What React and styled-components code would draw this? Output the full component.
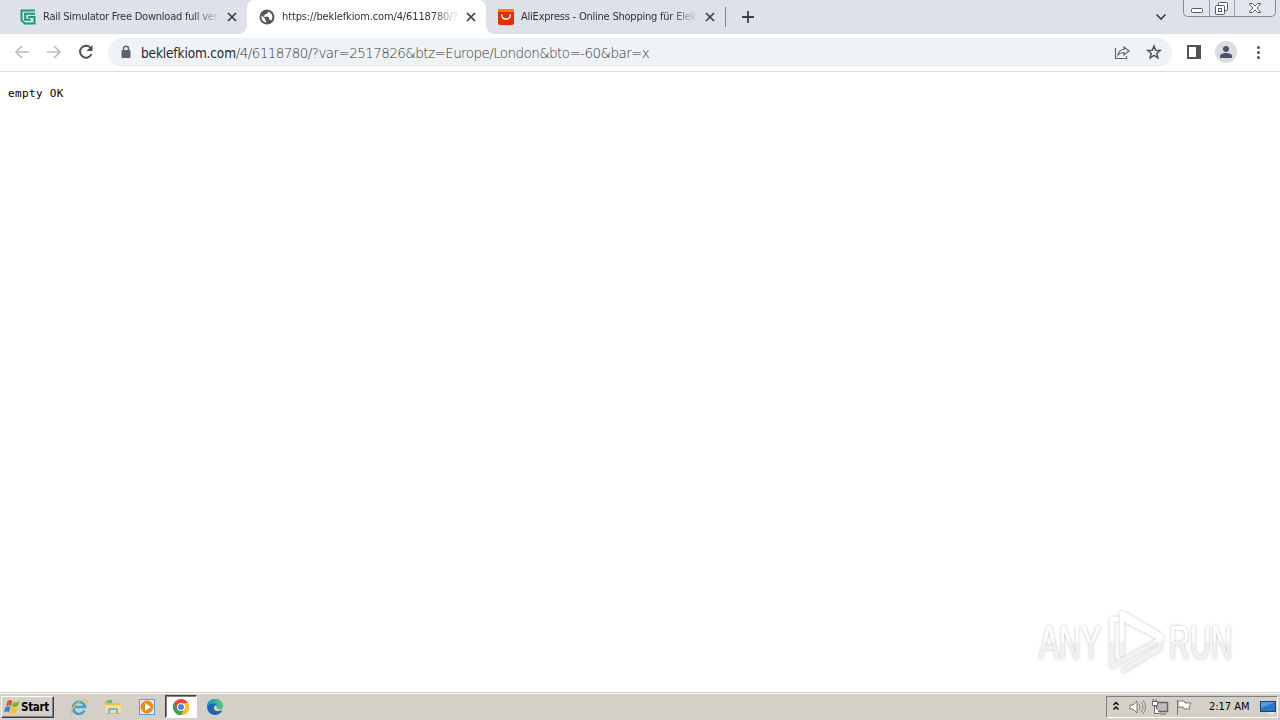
import React from 'react';
import styled, { createGlobalStyle } from 'styled-components';

const Global = createGlobalStyle`
*{ box-sizing:border-box; }
html,body{ margin:0;background:#fff;overflow:hidden; }
svg{ display:block;flex:none; }
`;

const Screen = styled.div`
width:1280px;height:720px;display:flex;flex-direction:column;overflow:hidden;background:#fff;
font-family:'DejaVu Sans Condensed','DejaVu Sans',sans-serif;font-stretch:condensed;
`;

const TabStrip = styled.header`
height:34px;flex:none;display:flex;background:#dee1e8;padding-left:8px;
`;
const Tab = styled.div`
position:relative;width:239px;height:34px;display:flex;align-items:center;padding:0 8px 0 12px;
border-radius:8px 8px 0 0;background:${({$active})=>$active ? '#fff' : 'transparent'};
&::before,&::after{ content:'';position:absolute;bottom:0;width:8px;height:8px;display:${({$active})=>$active ? 'block' : 'none'}; }
&::before{ left:-8px;background:radial-gradient(circle at 0 0,transparent 7.5px,#fff 8px); }
&::after{ right:-8px;background:radial-gradient(circle at 100% 0,transparent 7.5px,#fff 8px); }
`;
const TabTitle = styled.span`
width:178px;height:18px;line-height:17px;margin-left:7px;margin-right:6px;white-space:nowrap;
font-size:11px;letter-spacing:${({$track})=>$track || 0}px;color:#303338;
mask-image:linear-gradient(90deg,#000 150px,transparent 178px);
`;
const Separator = styled.i` width:1px;height:20px;margin-top:7px;background:#80868b; `;
const NewTab = styled.div` margin:10px 0 0 15px; `;
const TabSearch = styled.div` margin:13px 16px 0 auto; `;
const WindowButtons = styled.div`
display:flex;width:93px;height:17px;margin-right:4px;border:1px solid #868a92;border-top:0;border-radius:0 0 5px 5px;background:#e2e5eb;
`;
const WindowButton = styled.div`
width:${({$w})=>$w}px;display:flex;justify-content:center;border-left:${({$line})=>$line ? '1px solid #9a9da4' : '0'};
`;

const Toolbar = styled.div`
height:38px;flex:none;display:flex;align-items:center;padding:0 12px;border-bottom:1px solid #dadce0;
`;
const NavButton = styled.div` width:20px;height:20px;margin-right:12px;margin-top:-2px; `;
const AddressBar = styled.div`
width:1064px;height:29px;display:flex;align-items:center;padding:0 8px 1px 12px;border-radius:15px;background:#f0f3f5;
`;
const Url = styled.div`
flex:1;margin:1px 0 0 9px;white-space:nowrap;font-family:'DejaVu Sans Light','DejaVu Sans',sans-serif;font-size:13.5px;line-height:20px;font-weight:200;
font-stretch:normal;letter-spacing:-.58px;color:#33373c;
b{ font-family:'DejaVu Sans Condensed','DejaVu Sans',sans-serif;font-stretch:condensed;font-weight:400;letter-spacing:-.14px;color:#25282c; }
`;
const Actions = styled.div` display:flex;align-items:center;gap:12px; `;
const ChromeActions = styled.div` display:flex;align-items:center;margin:-2px 0 0 12px;gap:10px; `;

const Page = styled.main` position:relative;flex:1; `;
const Output = styled.pre`
margin:15px 0 0 8px;font:11px/13px 'DejaVu Sans Mono',monospace;letter-spacing:.35px;color:#000;
`;
const Watermark = styled.div` position:absolute;left:1031px;top:532px; `;

const Taskbar = styled.footer`
height:28px;flex:none;display:flex;align-items:center;background:#d4d0c8;border-top:1px solid #d4d0c8;box-shadow:inset 0 1px #fff;
`;
const StartButton = styled.div`
width:53px;height:22px;margin:0 9px 0 1px;padding-left:2px;display:flex;align-items:center;
border:1px solid;border-color:#fff #404040 #404040 #fff;box-shadow:inset -1px -1px #808080;
font-size:11.5px;font-weight:700;letter-spacing:-.3px;color:#000;
`;
const TaskIcon = styled.div`
width:32px;height:23px;margin:0 2px 0 0;display:flex;align-items:center;justify-content:center;
${({$active})=>$active && 'background:#fff;border:1px solid;border-color:#404040 #fff #fff #404040;box-shadow:inset 1px 1px #808080;'}
`;
const Tray = styled.div`
width:172px;height:22px;margin:0 2px 0 auto;padding-left:5px;display:flex;align-items:center;gap:4px;border:1px solid;border-color:#808080 #fff #fff #808080;
`;
const ShowHidden = styled.div` margin-right:4px; `;
const Clock = styled.span` width:42px;margin:0 4px 0 11px;font-size:11px;letter-spacing:-.02px;white-space:nowrap;color:#000; `;

const Close = () => (
<svg width="10" height="10" viewBox="0 0 10 10"><path d="M1 1l8 8M9 1L1 9" stroke="#3c4043" strokeWidth="1.7"/></svg>
);

function SiteLogo(){
return (
<svg width="16" height="16" viewBox="0 0 16 16">
<path d="M15 1.500H1.500v9.700l3.300 3.300H14.500V8H8M15 4.800H5.200v6h5.500" fill="none" stroke="#199b78" strokeWidth="2"/>
</svg>
)
}

function Globe(){
return (
<svg width="16" height="16" viewBox="0 0 16 16">
<circle cx="8" cy="8" r="7.500" fill="#54585d"/>
<path d="M2.500 6.500L6 9.500v1.300l1.300 1.200v1.500C4 13 1.800 10 2.500 6.500zM9 2.400v1.200L7.600 5H6v1.500H4.800v1.300H9l1 1v1.800h1l1.300.8C14.400 8.500 13.500 4 9 2.400z" fill="#fff"/>
</svg>
)
}

function ShopLogo(){
return (
<svg width="16" height="16" viewBox="0 0 16 16">
<rect width="16" height="16" rx="2" fill="#e62e04"/>
<path d="M0 2a2 2 0 012-2h12a2 2 0 012 2v1H0z" fill="#ff7a00"/>
<path d="M3.700 6c.5 5.400 8.100 5.400 8.600 0" fill="none" stroke="#fff" strokeWidth="1.500" strokeLinecap="round"/>
</svg>
)
}

const Back = ({ flip }) => (
<svg width="20" height="20" viewBox="0 0 20 20"><path transform={flip ? 'translate(20) scale(-1 1)' : undefined} d="M17 10H4m6-6l-6 6 6 6" fill="none" stroke="#babcbe" strokeWidth="1.7"/></svg>
);

function Brand(){
return (
<svg width="210" height="76" viewBox="0 0 210 76">
<defs>
<filter id="soft" x="-10%" y="-10%" width="120%" height="130%"><feDropShadow dx="0" dy="0" stdDeviation="1.700" floodColor="#777" floodOpacity=".5"/></filter>
<linearGradient id="fade" gradientUnits="userSpaceOnUse" x1="0" y1="0" x2="0" y2="76"><stop offset=".49" stopColor="#fff"/><stop offset=".5" stopColor="#f1f1f1"/></linearGradient>
</defs>
<g filter="url(#soft)" fill="url(#fade)">
<text x="8" y="55" textLength="62" lengthAdjust="spacingAndGlyphs" fontFamily="Liberation Sans" fontSize="49">ANY</text>
<text x="138" y="55" textLength="63" lengthAdjust="spacingAndGlyphs" fontFamily="Liberation Sans" fontSize="49">RUN</text>
<g fill="none" stroke="url(#fade)" strokeWidth="4.500" strokeLinejoin="round" strokeLinecap="round">
<path d="M91 50V9l39 23-3 1-35-18M86 15h-5v47l5-3M85 60l45-25M93 66l36-22v-6"/>
</g>
</g>
</svg>
)
}

export default function App(){
return (
<>
<Global />
<Screen>
<TabStrip>
<Tab>
<SiteLogo />
<TabTitle $track={-0.23}>Rail Simulator Free Download full ver</TabTitle>
<Close />
</Tab>
<Tab $active>
<Globe />
<TabTitle $track={-0.13}>https://beklefkiom.com/4/6118780/?</TabTitle>
<Close />
</Tab>
<Tab>
<ShopLogo />
<TabTitle $track={-0.22}>AliExpress - Online Shopping für Elek</TabTitle>
<Close />
</Tab>
<Separator />
<NewTab><svg width="14" height="14" viewBox="0 0 14 14"><path d="M7 1v12M1 7h12" stroke="#3c4043" strokeWidth="1.8"/></svg></NewTab>
<TabSearch><svg width="12" height="8" viewBox="0 0 12 8"><path d="M1.500 1.500L6 6l4.500-4.500" fill="none" stroke="#3c4043" strokeWidth="1.7"/></svg></TabSearch>
<WindowButtons>
<WindowButton $w={25}><svg width="14" height="16" viewBox="0 0 14 16"><rect x="1.500" y="8.500" width="11" height="4" rx="1" fill="#fff" stroke="#555961"/></svg></WindowButton>
<WindowButton $w={25} $line><svg width="16" height="16" viewBox="0 0 16 16" fill="#fff" stroke="#555961"><rect x="4.500" y="2.500" width="9" height="8" rx="1"/><rect x="1.500" y="5.500" width="9" height="9" rx="1"/><rect x="4.500" y="8.500" width="3" height="3"/></svg></WindowButton>
<WindowButton $w={41} $line><svg width="14" height="16" viewBox="0 0 14 16"><path d="M1.500 3.500h3L7 6l2.500-2.500h3V4L9 8l3.500 4v.5h-3L7 10l-2.500 2.500h-3V12L5 8 1.500 4z" fill="#fff" stroke="#555961"/></svg></WindowButton>
</WindowButtons>
</TabStrip>

<Toolbar>
<NavButton><Back /></NavButton>
<NavButton><Back flip /></NavButton>
<NavButton><svg width="20" height="20" viewBox="0 0 20 20"><path d="M15.500 12.200A6 6 0 1114.800 6" fill="none" stroke="#505357" strokeWidth="2"/><path d="M16.500 3v6h-6z" fill="#505357"/></svg></NavButton>
<AddressBar>
<svg width="12" height="14" viewBox="0 0 12 14"><rect x="1.500" y="5" width="9" height="8" rx="1" fill="#5f6368"/><path d="M3.500 6V3.700a2.500 2.500 0 015 0V6" fill="none" stroke="#5f6368" strokeWidth="1.400"/></svg>
<Url><b>beklefkiom.com</b>/4/6118780/?var=2517826&amp;btz=Europe/London&amp;bto=-60&amp;bar=x</Url>
<Actions>
<svg width="20" height="20" viewBox="0 0 20 20" fill="none" stroke="#5f6368" strokeWidth="1.200"><path d="M3.500 6v10.500h11V14M6 13c.5-4 3-5.500 6-5.500V5l5 4-5 4v-2.500c-2.500 0-4.500.5-6 2.500z"/></svg>
<svg width="20" height="20" viewBox="0 0 20 20"><path d="M10 4l1.700 4.200 4.500.3-3.400 2.900 1.100 4.400-3.900-2.400-3.900 2.400 1.100-4.400-3.400-2.900 4.500-.3z" fill="none" stroke="#505357" strokeWidth="1.500"/></svg>
</Actions>
</AddressBar>
<ChromeActions>
<svg width="20" height="20" viewBox="0 0 20 20"><rect x="4" y="4" width="12" height="12" fill="none" stroke="#505357" strokeWidth="2"/><path d="M12 4h4v12h-4z" fill="#505357"/></svg>
<svg width="24" height="24" viewBox="0 0 24 24"><circle cx="12" cy="12" r="11" fill="#dadde2"/><circle cx="12" cy="9" r="3" fill="#48546e"/><path d="M6 18v-2c0-4 12-4 12 0v2z" fill="#48546e"/></svg>
<svg width="20" height="20" viewBox="0 0 20 20" fill="#505357"><circle cx="10.500" cy="5.500" r="1.500"/><circle cx="10.500" cy="10.500" r="1.500"/><circle cx="10.500" cy="15.500" r="1.500"/></svg>
</ChromeActions>
</Toolbar>

<Page>
<Output>empty OK</Output>
<Watermark><Brand /></Watermark>
</Page>

<Taskbar>
<StartButton>
<svg width="17" height="16" viewBox="0 0 16 16"><path d="M3 2q3-2 5 0L6.500 7q-2-1.500-5 0z" fill="#e55425"/><path d="M9 3q3 1 6-1l-1.500 5q-3 2-6 .5z" fill="#76b82a"/><path d="M1 8q3-1.500 5 0l-1.500 5.500q-2-2-5 0z" fill="#3787d0"/><path d="M7 8.500q3 1.500 6 0L11.500 14q-3 1.500-6 0z" fill="#fdbd24"/></svg>
Start
</StartButton>
<TaskIcon>
<svg width="18" height="18" viewBox="0 0 18 18"><path d="M14.500 12.500A6 6 0 1115 9H5" fill="none" stroke="#38a4df" strokeWidth="2.600"/><path d="M2 16C-1 11 12-1 16.500 2.500c.8.700.6 2-.3 3.500" fill="none" stroke="#efbd37" strokeWidth="1.300"/></svg>
</TaskIcon>
<TaskIcon>
<svg width="18" height="18" viewBox="0 0 18 18"><path d="M1 3h6l1 2h9v11H1z" fill="#e8be54"/><path d="M3 2h5v3H3z" fill="#71b86b"/><path d="M1 7h16v8H1z" fill="#f7df8e"/><path d="M4 16v-4q0-2 2-2h6q2 0 2 2v4h-2v-4H6v4z" fill="#78b7dc"/></svg>
</TaskIcon>
<TaskIcon>
<svg width="18" height="18" viewBox="0 0 18 18"><rect x="1.500" y="1.500" width="15" height="15" fill="#d9edfb" stroke="#5c9fd4"/><circle cx="9" cy="9" r="6.500" fill="#f28b17"/><path d="M7 5l6 4-6 4z" fill="#fff"/></svg>
</TaskIcon>
<TaskIcon $active>
<svg width="16" height="16" viewBox="0 0 16 16"><circle cx="8" cy="8" r="8" fill="#e94335"/><path d="M1.070 4A8 8 0 008 16l3.500-6-3.500-2-3.500 2z" fill="#34a353"/><path d="M8 4h6.930A8 8 0 018 16l3.460-6z" fill="#fbc116"/><circle cx="8" cy="8" r="4" fill="#fff"/><circle cx="8" cy="8" r="3" fill="#4285f4"/></svg>
</TaskIcon>
<TaskIcon>
<svg width="18" height="18" viewBox="0 0 18 18"><defs><linearGradient id="edge"><stop stopColor="#168edb"/><stop offset="1" stopColor="#54cf67"/></linearGradient></defs><circle cx="9" cy="9" r="8" fill="#1767b2"/><path d="M1 9C1-2 17-1 17 8c0 4-6 4-6 1 1-4-6-5-10 0z" fill="url(#edge)"/><path d="M10 7c-4 2-2 7 3 6l4-1V9c-1 3-6 3-6 0z" fill="#d4d0c8"/></svg>
</TaskIcon>
<Tray>
<ShowHidden><svg width="8" height="12" viewBox="0 0 8 12"><path d="M1.500 4L4 1.500 6.500 4M1.500 8.500L4 6l2.500 2.500" fill="none" stroke="#000" strokeWidth="1.400"/></svg></ShowHidden>
<svg width="18" height="18" viewBox="0 0 18 18"><path d="M2 7h3l4-4v12l-4-4H2z" fill="#fff" stroke="#77736d"/><path d="M11 6q2 3 0 6M13 4q4 5 0 10M15 2q5 7 0 14" fill="none" stroke="#888"/></svg>
<svg width="20" height="18" viewBox="0 0 20 18"><path d="M6.500 4.500h11v9h-11z" fill="#bbb" stroke="#666" strokeWidth="1.500"/><path d="M3 1v3m3-3v3M2.500 3.500h5v4h-5zM4.500 8v7.500h5M10 16h6" fill="#fff" stroke="#666"/></svg>
<svg width="20" height="18" viewBox="0 0 20 18"><path d="M3.500 2v15M4 3h6l1 2h6l-2 4 1 2h-6L9 9H4z" fill="#fff" stroke="#777"/></svg>
<Clock>2:17 AM</Clock>
<svg width="18" height="16" viewBox="0 0 18 16"><rect x="1.500" y="2.500" width="15" height="10" fill="#2d75c8" stroke="#17427c"/><path d="M2 3h14L2 9z" fill="#5898dc"/><path d="M9 14h6" stroke="#fff"/></svg>
</Tray>
</Taskbar>
</Screen>
</>
)
}
